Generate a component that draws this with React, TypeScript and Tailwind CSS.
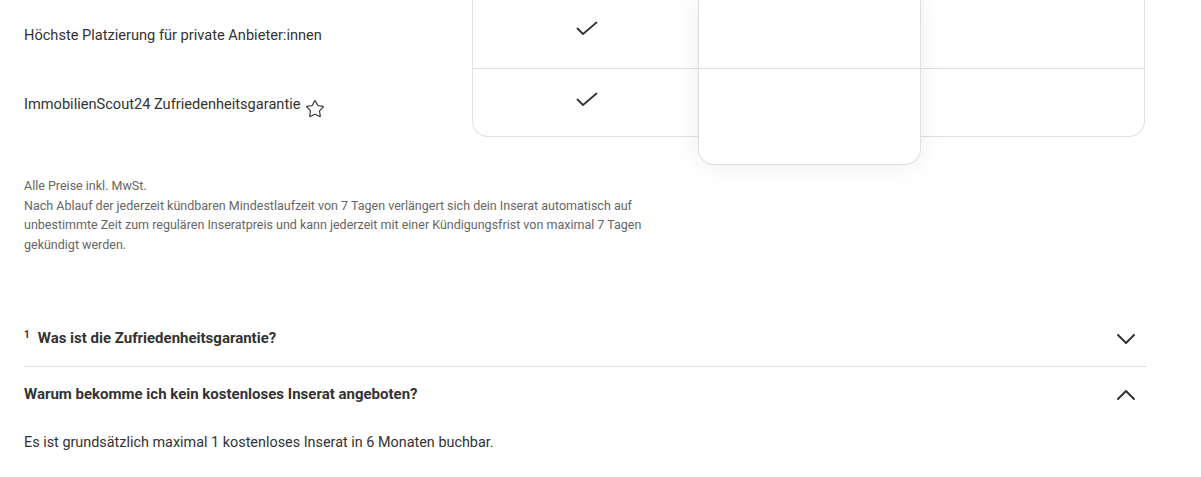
import { ChevronDown, ChevronUp, Star } from 'lucide-react';

const rows = [
  { label: 'Höchste Platzierung für private Anbieter:innen', star: false },
  { label: 'ImmobilienScout24 Zufriedenheitsgarantie', star: true },
];

const CheckMark = () => (
  <svg width="22" height="16" viewBox="0 0 22 16" fill="none" stroke="#333" strokeWidth="1.8" strokeLinecap="round" strokeLinejoin="round">
    <path d="M1.5 7.5 7 13 20.5 1.5" />
  </svg>
);

const App = () => {
  return (
    <div className="min-h-screen bg-white px-6 text-[#333] font-['Roboto',sans-serif]">
      {/* Feature table */}
      <div className="flex w-[1121px]">
        <div className="w-[448px]">
          {rows.map((row, i) => (
            <div
              key={row.label}
              className={`flex items-center text-[14.6px] ${i === 0 ? 'h-[69px] pt-[3px]' : 'h-[68px] pt-[3px]'}`}
            >
              <span>{row.label}</span>
              {row.star && <Star className="ml-[5px] mt-[8px] h-[20px] w-[20px]" strokeWidth={1.4} />}
            </div>
          ))}
        </div>
        <div className="flex w-[673px] items-start rounded-b-2xl border border-t-0 border-[#e0e0e0]">
          <div className="w-[225px]">
            <div className="flex h-[69px] items-center justify-center border-b border-[#e0e0e0] pb-[10px] pl-[2px]">
              <CheckMark />
            </div>
            <div className="flex h-[67px] items-center justify-center pb-[6px] pl-[2px]">
              <CheckMark />
            </div>
          </div>
          <div className="relative z-10 -mb-[29px] h-[165px] w-[223px] rounded-b-2xl border border-t-0 border-[#e0e0e0] bg-white shadow-[0_0_24px_rgba(0,0,0,0.08)]">
            <div className="h-[69px] border-b border-[#e0e0e0]" />
          </div>
          <div className="flex-1">
            <div className="h-[69px] border-b border-[#e0e0e0]" />
            <div className="h-[67px]" />
          </div>
        </div>
      </div>

      {/* Fine print */}
      <div className="mt-[39px] w-[625px] text-[12.5px] leading-[19.5px] text-[#666]">
        <p>Alle Preise inkl. MwSt.</p>
        <p>
          Nach Ablauf der jederzeit kündbaren Mindestlaufzeit von 7 Tagen verlängert sich dein Inserat automatisch auf
          unbestimmte Zeit zum regulären Inseratpreis und kann jederzeit mit einer Kündigungsfrist von maximal 7 Tagen
          gekündigt werden.
        </p>
      </div>

      {/* FAQ */}
      <div className="mt-[57px] w-[1122px]">
        <div className="flex h-[56px] items-center justify-between border-b border-[#ddd]">
          <div className="flex items-center font-bold">
            <span className="mb-[8px] mr-[8px] text-[10px]">1</span>
            <span className="text-[15px]">Was ist die Zufriedenheitsgarantie?</span>
          </div>
          <ChevronDown className="mr-[4px] h-8 w-8" strokeWidth={1.5} />
        </div>
        <div className="flex h-[55px] items-center justify-between">
          <span className="text-[15px] font-bold">Warum bekomme ich kein kostenloses Inserat angeboten?</span>
          <ChevronUp className="mr-[4px] h-8 w-8" strokeWidth={1.5} />
        </div>
        <p className="mt-[10px] text-[14.4px]">Es ist grundsätzlich maximal 1 kostenloses Inserat in 6 Monaten buchbar.</p>
      </div>
    </div>
  );
};

export default App;
